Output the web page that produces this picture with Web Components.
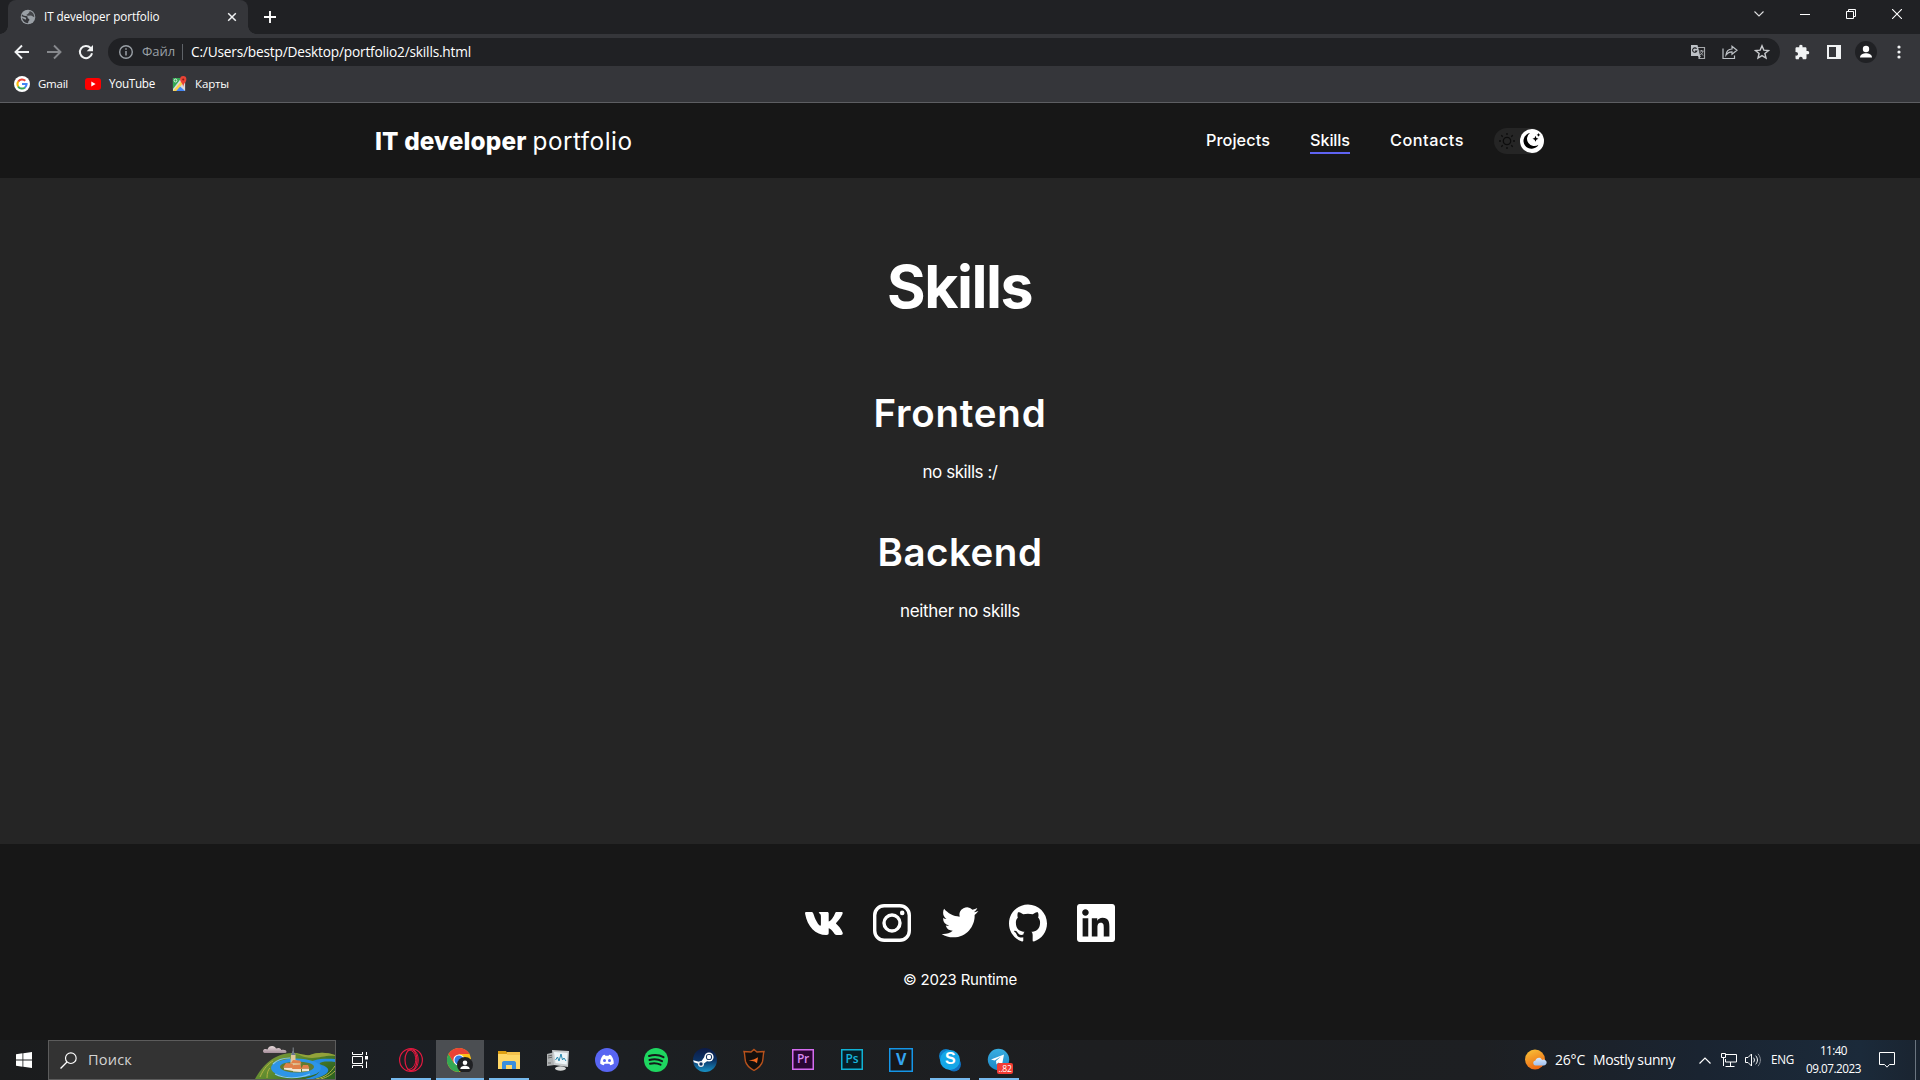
<!DOCTYPE html>
<html lang="ru">
<head>
<meta charset="utf-8">
<title>IT developer portfolio</title>
<style>
html,body{margin:0;height:100%;background:#252525;overflow:hidden}
body{font-family:"Open Sans","Noto Sans",sans-serif;color:#fff}
</style>
</head>
<body>
<app-desktop></app-desktop>
<script>
const ICONS = {
globe:['0 0 16 16','<circle cx="8" cy="8" r="7.3" fill="#9aa0a6"/><path d="M2 5.2C3 7 5 7 7.3 7.2c.6 1.3-.2 2 1.400 2.500 1 .5 1 1.800-.2 2.200L8 14.300C5 14 2.700 12 2 9l3.200 1.600c1.300 0 1.200-1.700.2-2.200L1.700 7.200z" fill="#35363a"/><path d="M8.300 2l1.500.2c0 1.300-1.700 1.600-1.700 2.600L6.200 6l1.500.8 3.400-.3 3.200 1.700c0-3.800-2.600-6.300-6-6.200z" fill="#35363a" opacity=".85"/>'],
close:['0 0 10 10','<path d="M1.200 1.200l7.600 7.600M8.800 1.200L1.200 8.800" stroke="#f1f3f4" stroke-width="1.500"/>'],
plus:['0 0 14 14','<path d="M7 1v12M1 7h12" stroke="#fff" stroke-width="1.900"/>'],
back:['0 0 16 16','<path d="M15 8H2.500M8 1.500L1.500 8 8 14.500" fill="none" stroke="#f1f3f4" stroke-width="1.900"/>'],
fwd:['0 0 16 16','<path d="M1 8h12.500M8 1.500L14.500 8 8 14.500" fill="none" stroke="#87898d" stroke-width="1.900"/>'],
reload:['0 0 16 16','<path d="M14 9.200A6.100 6.100 0 1 1 12.600 4L14 5.500" fill="none" stroke="#f1f3f4" stroke-width="2"/><path d="M15 1v6.300H8.700z" fill="#f1f3f4"/>'],
info:['0 0 16 16','<circle cx="8" cy="8" r="6.300" fill="none" stroke="#9aa0a6" stroke-width="1.400"/><path d="M8 7v4.500M8 4.300v1.500" stroke="#9aa0a6" stroke-width="1.500"/>'],
google:['0 0 16 16','<circle cx="8" cy="8" r="8" fill="#fff"/><g fill="none" stroke-width="2"><path d="M4.200 5.600A4.600 4.600 0 0 1 11.300 4.800" stroke="#ea4335"/><path d="M4.200 10.500a4.700 4.700 0 0 1 0-5" stroke="#fbbc05"/><path d="M11 11.500a4.600 4.600 0 0 1-6.900-1.100" stroke="#34a853"/><path d="M8 8.100h4.600a4.600 4.600 0 0 1-1.700 3.500" stroke="#4285f4"/></g>'],
youtube:['0 0 16 12','<rect width="16" height="12" rx="3" fill="#f00"/><path d="M6.300 3.500v5L10.600 6z" fill="#fff"/>'],
maps:['0 0 16 16','<path d="M1 2h13v13H1z" fill="#dadce0"/><path d="M1 2h9L1 13z" fill="#34a853"/><path d="M3 15l5-5 6 5z" fill="#4285f4"/><path d="M1 15L11 4l2 2-8.500 9z" fill="#fbd24b"/><circle cx="3.700" cy="4.500" r="1.500" fill="none" stroke="#fff" stroke-width=".8"/><path d="M12 0a3.300 3.300 0 0 1 3.300 3.500C15.300 6 12.500 7 12 11c-.5-4-3.300-5-3.300-7.500A3.300 3.300 0 0 1 12 0z" fill="#ea4335"/><circle cx="12" cy="3.500" r="1.100" fill="#8c1d13"/>'],
translate:['0 0 16 16','<path d="M7 3.500h7.500v11H8.500" fill="none" stroke="#a4a6a9" stroke-width="1.200"/><path d="M1 1h6.500l2.700 11H1z" fill="#bdc1c6"/><path d="M8 12h3l-2 3z" fill="#bdc1c6"/><path d="M6.600 4.800a2.200 2.200 0 1 0 .2 2.200H4.900" fill="none" stroke="#202124" stroke-width="1.100"/><path d="M9.500 7h4M11.500 6v1.300M13 7c-.5 2-1.500 3.200-3 4M10.500 8.500l2.500 3" stroke="#a4a6a9" fill="none"/>'],
share:['0 0 16 16','<path d="M1 4.500v10h11.500v-3" fill="none" stroke="#bdc1c6" stroke-width="1.200"/><path d="M4 11c.3-3.800 2.300-5.800 6-6V2.200L15 6.300l-5 4V7.800c-3-.1-4.500 1-6 3.200z" fill="none" stroke="#bdc1c6" stroke-width="1.200"/>'],
star:['0 0 16 16','<path d="M8 1.800l1.800 4.300 4.700.4-3.600 3 1.100 4.600L8 11.600l-4 2.500 1.100-4.600-3.600-3 4.700-.4z" fill="none" stroke="#c8cacd" stroke-width="1.400"/>'],
puzzle:['0 0 16 16','<path d="M1.500 4.500c0-.8.5-1.300 1.300-1.300h2.500C5 1.400 5.700.7 6.900.7s1.900.7 1.600 2.500h2.700c.8 0 1.300.5 1.300 1.300v2.600c1.800-.3 2.700.4 2.700 1.600s-.9 1.900-2.700 1.600V14c0 .8-.5 1.300-1.300 1.300H8.700c.2-1.600-.5-2.600-1.900-2.600s-2.100 1-1.900 2.600H2.800c-.8 0-1.300-.5-1.300-1.300v-2.400c1.600.2 2.500-.4 2.500-1.600S3.100 7.900 1.500 8.100z" fill="#f1f3f4"/>'],
panel:['0 0 14 14','<path fill-rule="evenodd" d="M0 0h14v14H0zM2 2v10h7V2z" fill="#f1f3f4"/>'],
person:['0 0 22 22','<circle cx="11" cy="11" r="11" fill="#202124"/><circle cx="11" cy="8" r="3.200" fill="#fff"/><path d="M5 16.500c0-3 3.500-4.200 6-4.200s6 1.200 6 4.200z" fill="#fff"/>'],
dots:['0 0 4 14','<circle cx="2" cy="2" r="1.600" fill="#f1f3f4"/><circle cx="2" cy="7" r="1.600" fill="#f1f3f4"/><circle cx="2" cy="12" r="1.600" fill="#f1f3f4"/>'],
chevd:['0 0 10 6','<path d="M.5.500L5 5 9.500.5" fill="none" stroke="#dedfe0" stroke-width="1.100"/>'],
min:['0 0 10 10','<path d="M0 5.500h10" stroke="#fff"/>'],
restore:['0 0 10 10','<path d="M.5 2.500h7v7h-7zM2.500 2.500v-2h7v7h-2" fill="none" stroke="#fff"/>'],
wclose:['0 0 10 10','<path d="M0 0l10 10M10 0L0 10" stroke="#fff" stroke-width="1.100"/>'],
sun:['0 0 16 16','<circle cx="8" cy="8" r="3.700" fill="none" stroke="#0c0c0c" stroke-width="1.300"/><path d="M8 0v2M8 14v2M0 8h2M14 8h2M2.300 2.300l1.400 1.400M12.300 12.300l1.400 1.400M13.700 2.300l-1.400 1.400M3.700 12.300l-1.400 1.400" stroke="#0c0c0c" stroke-width="1.300"/>'],
moon:['0 0 24 24','<circle cx="12" cy="12" r="12" fill="#fff"/><path d="M10 4a7 7 0 0 0 8.500 11.700A8 8 0 1 1 10 4z" fill="#000"/><path d="M15.500 6.800l.9 2.100 2.100.9-2.100.9-.9 2.100-.9-2.100-2.100-.9 2.100-.9zM18.500 4l.6 1.300 1.300.6-1.300.6-.6 1.300-.6-1.300-1.300-.6 1.300-.6z" fill="#000"/>'],
vk:['0 0 38 38','<path d="M1.300 8h5c1.200 0 1.700.5 2.100 1.700C9.900 14.500 12.500 19.800 14.700 21.500c.8.500 1.200.2 1.200-1.200v-8.200c-.1-1.700-.6-2.200-1.700-2.800-.8-.5-.5-1.300.7-1.300h7.300c1 0 1.500.5 1.500 1.600v7.800c1.800-.3 4.700-4 6.300-8 .4-.9.900-1.400 2-1.400h4.400c1.200 0 1.500.7 1.200 1.600-.9 3.300-4.500 7.400-6.700 9.800 2.200 1.900 5.200 5 6.700 9 .5 1.500-.1 2.600-1.600 2.600h-4.400c-1.500 0-2-.9-3.200-2.700-1.200-1.700-3-3.500-4.700-4v4.200c0 1.800-.5 2.500-2.400 2.500C10.500 31 2.300 22.500.1 9.700 0 8.700.3 8 1.300 8z" fill="#fff"/>'],
instagram:['0 0 38 38','<rect x="1.700" y="1.700" width="34.600" height="34.600" rx="9.500" fill="none" stroke="#fff" stroke-width="3.400"/><circle cx="19" cy="19" r="8" fill="none" stroke="#fff" stroke-width="3.400"/><circle cx="29.200" cy="8.900" r="2.300" fill="#fff"/>'],
twitter:['-.4 0 24.800 24.800','<path d="M23.953 4.570a10 10 0 01-2.825.775 4.958 4.958 0 002.163-2.723c-.951.555-2.005.959-3.127 1.184a4.920 4.920 0 00-8.384 4.482C7.690 8.095 4.067 6.130 1.640 3.162a4.822 4.822 0 00-.666 2.475c0 1.710.870 3.213 2.188 4.096a4.904 4.904 0 01-2.228-.616v.060a4.923 4.923 0 003.946 4.827 4.996 4.996 0 01-2.212.085 4.936 4.936 0 004.604 3.417 9.867 9.867 0 01-6.102 2.105c-.390 0-.779-.023-1.170-.067a13.995 13.995 0 007.557 2.209c9.053 0 13.998-7.496 13.998-13.985 0-.210 0-.420-.015-.630A9.935 9.935 0 0024 4.590z" fill="#fff"/>'],
github:['0 0 24 24','<path d="M12 .297c-6.630 0-12 5.373-12 12 0 5.303 3.438 9.800 8.205 11.385.600.113.820-.258.820-.577 0-.285-.010-1.040-.015-2.040-3.338.724-4.042-1.610-4.042-1.610C4.422 18.070 3.633 17.700 3.633 17.700c-1.087-.744.084-.729.084-.729 1.205.084 1.838 1.236 1.838 1.236 1.070 1.835 2.809 1.305 3.495.998.108-.776.417-1.305.760-1.605-2.665-.300-5.466-1.332-5.466-5.930 0-1.310.465-2.380 1.235-3.220-.135-.303-.540-1.523.105-3.176 0 0 1.005-.322 3.300 1.230.960-.267 1.980-.399 3-.405 1.020.006 2.040.138 3 .405 2.280-1.552 3.285-1.230 3.285-1.230.645 1.653.240 2.873.120 3.176.765.840 1.230 1.910 1.230 3.220 0 4.610-2.805 5.625-5.475 5.920.420.360.810 1.096.810 2.220 0 1.606-.015 2.896-.015 3.286 0 .315.210.690.825.570C20.565 22.092 24 17.592 24 12.297c0-6.627-5.373-12-12-12" fill="#fff"/>'],
linkedin:['0 0 24 24','<path d="M20.447 20.452h-3.554v-5.569c0-1.328-.027-3.037-1.852-3.037-1.853 0-2.136 1.445-2.136 2.939v5.667H9.351V9h3.414v1.561h.046c.477-.9 1.637-1.850 3.370-1.850 3.601 0 4.267 2.370 4.267 5.455v6.286zM5.337 7.433c-1.144 0-2.063-.926-2.063-2.065 0-1.138.920-2.063 2.063-2.063 1.140 0 2.064.925 2.064 2.063 0 1.139-.925 2.065-2.064 2.065zm1.782 13.019H3.555V9h3.564v11.452zM22.225 0H1.771C.792 0 0 .774 0 1.729v20.542C0 23.227.792 24 1.771 24h20.451C23.200 24 24 23.227 24 22.271V1.729C24 .774 23.200 0 22.222 0h.003z" fill="#fff"/>'],
windows:['0 0 16 16','<path d="M0 2.200L6.500 1.300V7.600H0zM7.300 1.200L16 0v7.600H7.300zM0 8.400h6.500v6.300L0 13.800zM7.300 8.400H16V16l-8.700-1.200z" fill="#fff"/>'],
search:['0 0 16 16','<circle cx="10.200" cy="5.800" r="5" fill="none" stroke="#fff" stroke-width="1.100"/><path d="M6.600 9.400L.5 15.500" stroke="#fff" stroke-width="1.200"/>'],
taskview:['0 0 16 16','<path d="M.5 0v2.500h10V0M.5 16v-2.500h10V16M.500 4.500h10v7H.5zM14.500 0v3M14.500 9.500V16" fill="none" stroke="#fff"/><path d="M13 4h3v3.500h-3z" fill="#fff"/>'],
village:['0 0 80 38','<defs><linearGradient id="h" x2="1" y2=".6"><stop stop-color="#8fa23e"/><stop offset=".5" stop-color="#5d8a2e"/><stop offset="1" stop-color="#2f6420"/></linearGradient><linearGradient id="c" y2="1" x2="0"><stop stop-color="#e9dcdc"/><stop offset="1" stop-color="#a58d9a"/></linearGradient></defs><path d="M0 38C8 24 18 13 37 12c8 0 12 3 18 2 8-3 16-3 25 0v24z" fill="url(#h)"/><path d="M37 12c9 1 10 5 20 5 9 0 14-3 23-2v-1c-9-3-17-3-25 0-6 1-10-2-18-2z" fill="#94a23a"/><path d="M80 18c-14-1-26 1-25 5 1 3 11 4 9 8s-8 5-14 7h8c9-2 17-6 15-10-2-4-10-4-8-6 1-1 6-2 15-1z" fill="#278be0"/><ellipse cx="41" cy="27" rx="25" ry="9.500" fill="#2d95e8"/><path d="M18 23c4-4 10-6 17-6M20 33c9 5 24 5 35 0" stroke="#80c5f7" stroke-width="1.200" fill="none"/><ellipse cx="42" cy="26" rx="17" ry="5.500" fill="#617b30"/><path d="M36 14l2-4 2.500 4v5l5 2v6H35z" fill="#dfc79b"/><path d="M36 14l2-4.500 2.500 4.500z" fill="#69758d"/><path d="M38.200 6.500v4" stroke="#9aa3ad" stroke-width=".8"/><path d="M29 26.500h9V30l-9-1.500zM38 27.500h8V31l-8-.5zM47 27.500h7V30l-7 .5z" fill="#f4e4cf"/><path d="M28 26.500l3-4.500 6.500.5 1.500 4.500zM37 28l1.500-4 6.500-.5 2 4.500zM36 22l2-3 7 .5 1.500 3zM46.500 27.500l1.500-3.500h5l1.500 3.500z" fill="#e0804a"/><path d="M61 38c10-2 14-6 19-13M66 38c7-2 11-5 14-8M5 36c4-9 8-13 13-16M12 37c0-5 1-8 3-10" stroke="#b4b244" stroke-width="1" fill="none"/><path d="M8 10c0-2.500 3.500-2.500 4.500-1.500 1-4.500 7.500-4.500 8.500-1 3-1.500 5.500 0 5 1.500 3-.8 5.500 0 5.500 1.700 0 1-1 1.300-2 1.300H10C9 12 8 11.500 8 10z" fill="url(#c)"/>'],
opera:['0 0 24 24','<g fill="none" stroke="#e3193f"><circle cx="12" cy="12" r="11.400" stroke-width="1.200"/><ellipse cx="12" cy="12" rx="6" ry="10.500" stroke-width="1.200"/><path d="M8.500 2.500c10-3 12 19 0 19M14 1.500c7 3 7 18 0 21" stroke-width="1"/></g>'],
chrome:['0 0 26 24','<circle cx="12" cy="12" r="12" fill="#fbc116"/><path d="M1.600 6A12 12 0 0 0 12 24l5-9-10 0z" fill="#34a853"/><path d="M1.600 6A12 12 0 0 1 22.400 6H12L7 15z" fill="#ea4335"/><circle cx="12" cy="12" r="5.600" fill="#fff"/><circle cx="12" cy="12" r="4.500" fill="#347de0"/><circle cx="18" cy="17" r="8" fill="#202124"/><circle cx="18" cy="14.800" r="2.300" fill="#fff"/><path d="M13.300 21c0-2.500 2.700-3.300 4.700-3.300s4.700.8 4.700 3.300z" fill="#fff"/>'],
explorer:['0 0 24 24','<path d="M1 3h8l2 3h12v4H1z" fill="#dfa012"/><path d="M1 6h22v15H1z" fill="#ffd766"/><path d="M10 4h13v3H10z" fill="#f5c24c"/><path d="M5 21v-6c0-1 .5-2 2-2h10c1.500 0 2 1 2 2v6h-4v-4H9v4z" fill="#3a8edc"/>'],
monitor:['0 0 24 24','<path d="M1 6l8-2v13l-8 1z" fill="#aeb1b2"/><path d="M6 2l17 1-1 16-14-2z" fill="#c7cbcc"/><path d="M8 4l13.500 1-.8 11.500L9.500 15z" fill="#edf5f8"/><path d="M9.500 12l2-3 1.500 4 2-7 1.500 6 1.500-2 2 3" stroke="#2788ae" fill="none"/><ellipse cx="14.500" cy="20.500" rx="5.500" ry="2.200" fill="#d8dad9"/><path d="M2 8l4-.800M2 10l4-.800M2 15h3" stroke="#666"/>'],
discord:['0 0 24 24','<circle cx="12" cy="12" r="12" fill="#5865f2"/><path d="M8 7.300l1.800-.5.600 1h3.200l.6-1 1.800.5c2 2.500 3 5.500 2.700 8.400-1.300.9-2.400 1.300-3.500 1.500l-.8-1.400H9.600l-.8 1.400c-1.100-.2-2.200-.6-3.500-1.500C5 12.800 6 9.800 8 7.300z" fill="#fff"/><circle cx="9.500" cy="12.500" r="1.500" fill="#5865f2"/><circle cx="14.500" cy="12.500" r="1.500" fill="#5865f2"/>'],
spotify:['0 0 24 24','<circle cx="12" cy="12" r="12" fill="#1ed760"/><path d="M5 8c5-1.500 10.500-1 14.500 1.200M5.500 12c4.500-1.300 9-.8 12.500 1.200M6 15.700c4-1 7.500-.6 10.500 1" stroke="#14191a" stroke-width="2" stroke-linecap="round" fill="none"/>'],
steam:['0 0 24 24','<defs><linearGradient id="s" x2="0" y2="1"><stop stop-color="#0c1a45"/><stop offset=".5" stop-color="#0b3265"/><stop offset="1" stop-color="#1893c7"/></linearGradient></defs><circle cx="12" cy="12" r="12" fill="url(#s)"/><path d="M.2 12.300l7.500 2 4-5.800 4 3.500-6.800 5-8-2.800z" fill="#fff"/><circle cx="8" cy="16" r="3" fill="#eee"/><circle cx="8" cy="16" r="1.700" fill="#0b3265"/><circle cx="16" cy="9" r="4.600" fill="#fff"/><circle cx="16" cy="9" r="3.100" fill="#0b2b5b"/><circle cx="16" cy="9" r="2.200" fill="#fff"/>'],
shield:['0 0 24 24','<path d="M12 1.500l3 2.500 7-.5c-1 3-.500 5-1.500 10-1 4-5 7-8.500 9-3.500-2-7.500-5-8.500-9C2.500 8.500 3 6.500 2 3.500L9 4z" fill="#130f0d" stroke="#b8521c" stroke-width="1.400"/><path d="M6.500 12.200c4 0 6.500-1 9.500-3l-1 6-2.500-1.700z" fill="#f36a21"/>'],
pr:['0 0 22 21','<rect x=".75" y=".75" width="20.500" height="19.500" fill="#2a0634" stroke="#d56cf0" stroke-width="1.500"/>'],
ps:['0 0 22 21','<rect x=".75" y=".75" width="20.500" height="19.500" fill="#061e26" stroke="#10b2d5" stroke-width="1.500"/>'],
vegas:['0 0 24 24','<rect x=".75" y=".75" width="22.500" height="22.500" fill="#161719" stroke="#1596e8" stroke-width="1.500"/>'],
skype:['0 0 24 24','<circle cx="8" cy="8" r="7" fill="#0f7fc9"/><circle cx="16" cy="16.500" r="7" fill="#0f6fc0"/><circle cx="12" cy="12" r="10" fill="#14a7e8"/>'],
telegram:['0 0 24 24','<defs><linearGradient id="t" x2="0" y2="1"><stop stop-color="#37aee2"/><stop offset="1" stop-color="#1e88c7"/></linearGradient></defs><circle cx="11.500" cy="11.500" r="10.700" fill="url(#t)"/><path d="M4 11.500L17 6.500l-2 10.500-3.500-2.500-2 2-.5-3.500 5-4.500-6.500 4z" fill="#fff"/>'],
weather:['0 0 22 22','<defs><linearGradient id="w" x2=".4" y2="1"><stop stop-color="#f8c63a"/><stop offset="1" stop-color="#ee6a14"/></linearGradient><linearGradient id="wc" x2="0" y2="1"><stop stop-color="#dce9fc"/><stop offset="1" stop-color="#9fc0f0"/></linearGradient></defs><circle cx="10" cy="10.500" r="10" fill="url(#w)"/><path d="M11 16.500a2.500 2.500 0 0 1-.5-5c.5-2 2-3 4-2.800 1.500.3 2.300 1.300 2.500 2.300a3 3 0 1 1 2 5.500z" fill="url(#wc)"/>'],
chevu:['0 0 12 7','<path d="M.500 6.500L6 1l5.500 5.500" fill="none" stroke="#fff" stroke-width="1.200"/>'],
network:['0 0 16 14','<path d="M5 1.500h10.500v7.500H4.500V6M.500.500h4v4h-4zM2.500 4.500v8.500M4.500 13.500h9M9.500 9v4" fill="none" stroke="#fff"/>'],
volume:['0 0 16 14','<path d="M.5 4.500h2.500L6.500 1v12L3 9.500H.5z" fill="none" stroke="#fff"/><path d="M8.500 4.700c1.200 1.500 1.200 3.100 0 4.600M10.700 2.700c2.300 2.700 2.300 5.900 0 8.600" fill="none" stroke="#fff"/><path d="M13 .8c3.200 4 3.200 8.400 0 12.400" fill="none" stroke="#888e96"/>'],
notif:['0 0 16 16','<path d="M.500.500h15v12h-5L8 15.200 5.500 12.500h-5z" fill="none" stroke="#fff"/>']
};

class UiIcon extends HTMLElement{
  connectedCallback(){
    const [vb,body]=ICONS[this.getAttribute('name')];
    const w=this.getAttribute('w')||16,h=this.getAttribute('h')||w;
    this.attachShadow({mode:'open'}).innerHTML=`<style>:host{display:block;flex:none;width:${w}px;height:${h}px}svg{display:block}</style><svg width="${w}" height="${h}" viewBox="${vb}" preserveAspectRatio="none">${body}</svg>`;
  }
}
customElements.define('ui-icon',UiIcon);

/* One line of text whose tracking is tuned so that it fills the width in "w". */
class UiText extends HTMLElement{
  connectedCallback(){
    const w=+this.getAttribute('w'),s=this.getAttribute('s')||12;
    this.attachShadow({mode:'open'}).innerHTML=`<style>:host{display:block;flex:none;width:${w}px;font-size:${s}px;line-height:1.36;white-space:nowrap}span{display:inline-block}</style><span><slot></slot></span>`;
    const span=this.shadowRoot.querySelector('span');
    const n=this.textContent.length;
    span.style.letterSpacing=((w-span.getBoundingClientRect().width)/n).toFixed(3)+'px';
  }
}
customElements.define('ui-text',UiText);

function define(name,css,html){
  const t=document.createElement('template');
  t.innerHTML=`<style>*{box-sizing:border-box}${css}</style>${html}`;
  customElements.define(name,class extends HTMLElement{
    constructor(){super();this.attachShadow({mode:'open'}).append(t.content.cloneNode(true));}
  });
}

define('browser-tab',
 `:host{display:flex;align-items:center;position:relative;width:240px;height:34px;background:#35363a;border-radius:8px 8px 0 0;padding:0 11px 0 12px;box-sizing:border-box}
  :host::before,:host::after{content:"";position:absolute;bottom:0;width:8px;height:8px}
  :host::before{left:-8px;background:radial-gradient(circle at 0 0,#202124 7.500px,#35363a 8px)}
  :host::after{right:-8px;background:radial-gradient(circle at 100% 0,#202124 7.500px,#35363a 8px)}
  .t{flex:1;margin-left:8px}`,
 `<ui-icon name="globe" w="16"></ui-icon><div class="t"><slot></slot></div><ui-icon name="close" w="10"></ui-icon>`);
define('browser-tabs',
 `:host{display:flex;height:34px;background:#202124;padding:0 18px 0 8px}
  .plus{margin:10px 0 0 15px}.win{display:flex;align-items:flex-start;gap:36px;margin-left:auto;padding-top:9px}.c{margin-top:2px}`,
 `<browser-tab><ui-text w="115.500" s="11.700">IT developer portfolio</ui-text></browser-tab><ui-icon class="plus" name="plus" w="14"></ui-icon>
  <div class="win"><ui-icon class="c" name="chevd" w="10" h="6"></ui-icon><ui-icon name="min" w="10"></ui-icon><ui-icon name="restore" w="10"></ui-icon><ui-icon name="wclose" w="10"></ui-icon></div>`);
define('browser-toolbar',
 `:host{display:flex;align-items:center;height:36px;background:#35363a;padding:0 19px 0 14px}
  .box{display:flex;align-items:center;flex:1;height:28px;border-radius:14px;background:#202124;margin:0 14px 0 14px;padding:0 10px 0 10px}
  .nav,.right{display:flex;align-items:center;gap:16px}.grey{color:#9aa0a6;margin-left:8px}
  i{width:1px;height:16px;background:#5f6368;margin:0 8px 0 7px}.acts{display:flex;gap:16px;margin-left:auto}.right{gap:17px}.p{margin:0 3px 0 -3px}`,
 `<div class="nav"><ui-icon name="back" w="16"></ui-icon><ui-icon name="fwd" w="16"></ui-icon><ui-icon name="reload" w="16"></ui-icon></div>
  <div class="box"><ui-icon name="info" w="16"></ui-icon><ui-text class="grey" w="33" s="13">Файл</ui-text><i></i><ui-text w="280" s="13.700">C:/Users/bestp/Desktop/portfolio2/skills.html</ui-text>
  <div class="acts"><ui-icon name="translate" w="16"></ui-icon><ui-icon name="share" w="16"></ui-icon><ui-icon name="star" w="16"></ui-icon></div></div>
  <div class="right"><ui-icon name="puzzle" w="16"></ui-icon><ui-icon name="panel" w="14"></ui-icon><ui-icon class="p" name="person" w="22"></ui-icon><ui-icon name="dots" w="4" h="14"></ui-icon></div>`);
define('browser-bookmarks',
 `:host{display:flex;align-items:center;height:32px;background:#35363a;padding:0 0 4px 14px}
  ui-text{margin:0 17px 0 8px}`,
 `<ui-icon name="google" w="16"></ui-icon><ui-text w="30" s="11.500">Gmail</ui-text><ui-icon name="youtube" w="16" h="12"></ui-icon><ui-text w="46" s="11.700">YouTube</ui-text><ui-icon name="maps" w="15" h="16"></ui-icon><ui-text w="34" s="11.500">Карты</ui-text>`);

define('nav-link',
 `:host{display:block;font-weight:550;border-bottom:2px solid transparent;padding-top:2px}:host([active]){border-color:#5f63f2}`,`<slot></slot>`);
define('theme-switch',
 `:host{display:flex;align-items:center;width:50px;height:26px;border-radius:13px;background:#252525;padding:0 0 0 5px;box-sizing:border-box;justify-content:space-between}`,
 `<ui-icon name="sun" w="16"></ui-icon><ui-icon name="moon" w="24"></ui-icon>`);
define('site-header',
 `:host{display:flex;align-items:center;justify-content:space-between;height:75px;background:#171717;padding:0 376px 0 375px;font-family:Inter,sans-serif}
  .logo{display:flex;gap:6px;padding-top:2px}.b{font-weight:800}nav{display:flex;align-items:center;gap:40px}theme-switch{margin-left:-10px}`,
 `<div class="logo"><ui-text class="b" w="151.500" s="24.300">IT developer</ui-text><ui-text w="100" s="24.300">portfolio</ui-text></div>
  <nav><nav-link><ui-text w="64" s="16.300">Projects</ui-text></nav-link><nav-link active><ui-text w="40" s="16.300">Skills</ui-text></nav-link><nav-link><ui-text w="74" s="16.300">Contacts</ui-text></nav-link><theme-switch></theme-switch></nav>`);
define('skill-block',
 `:host{display:flex;flex-direction:column;align-items:center;height:139px}.p{margin-top:21px}`,
 `<slot name="title"></slot><div class="p"><slot></slot></div>`);
define('site-main',
 `:host{display:flex;flex-direction:column;align-items:center;height:666px;background:#252525;padding-top:69px;font-family:Inter,sans-serif}
  .h1{font-weight:650;margin:0 1px 60px 0}.h{font-weight:620}`,
 `<ui-text class="h1" w="145" s="59">Skills</ui-text>
  <skill-block><ui-text slot="title" class="h" w="173" s="38.500">Frontend</ui-text><ui-text w="75" s="17">no skills :/</ui-text></skill-block>
  <skill-block><ui-text slot="title" class="h" w="165" s="38.500">Backend</ui-text><ui-text w="120" s="17">neither no skills</ui-text></skill-block>`);
define('site-footer',
 `:host{display:flex;flex-direction:column;align-items:center;height:196px;background:#171717;padding-top:60px;font-family:Inter,sans-serif}
  .s{display:flex;gap:30px;margin-bottom:28px}`,
 `<div class="s"><ui-icon name="vk" w="38"></ui-icon><ui-icon name="instagram" w="38"></ui-icon><ui-icon name="twitter" w="38"></ui-icon><ui-icon name="github" w="38"></ui-icon><ui-icon name="linkedin" w="38"></ui-icon></div><ui-text w="114" s="15">© 2023 Runtime</ui-text>`);

define('task-item',
 `:host{display:flex;position:relative;align-items:center;justify-content:center;width:40px;height:40px;margin:0 4.500px;box-sizing:border-box}
  :host([open]){border-bottom:2px solid #76b9ed;padding-top:2px}:host([current]){width:48px;margin:0 .5px;background:#4b4e52}
  :host([raised]){padding-bottom:2px}
  .over{position:absolute;inset:0;display:flex;align-items:center;justify-content:center}:host([raised]) .over{bottom:2px}`,
 `<slot name="icon"></slot><div class="over"><slot></slot></div>`);
define('task-tray',
 `:host{display:flex;align-items:center;height:40px;margin-left:auto}
  .clock{display:flex;flex-direction:column;align-items:center;gap:2px;margin:0 18px 0 12px}
  hr{width:1px;height:40px;border:0;margin:0 4px 0 20px;background:#6b7580}`,
 `<ui-icon name="weather" w="22"></ui-icon><ui-text style="margin-left:8px" w="30" s="14">26°C</ui-text><ui-text style="margin-left:8px" w="82" s="14">Mostly sunny</ui-text>
  <ui-icon style="margin-left:24px" name="chevu" w="12" h="7"></ui-icon><ui-icon style="margin-left:10px" name="network" w="16" h="14"></ui-icon><ui-icon style="margin-left:8px" name="volume" w="16" h="14"></ui-icon>
  <ui-text style="margin-left:10px" w="23" s="11.700">ENG</ui-text>
  <div class="clock"><ui-text w="27" s="11.700">11:40</ui-text><ui-text w="55" s="11.700">09.07.2023</ui-text></div><ui-icon name="notif" w="16"></ui-icon><hr>`);
define('task-bar',
 `:host{display:flex;align-items:center;height:40px;background:linear-gradient(90deg,#1b1c1d 0,#1b1f24 400px,#1c1f22 600px,#1d1e20 1100px,#1d1f22 1480px,#1a2431 1700px,#1b2a3a 1860px,#1a2430)}
  .start{margin:0 16px}.search{display:flex;align-items:center;width:288px;height:40px;background:#333;border:1px solid #5c5c5c;padding-left:11px}
  .search ui-text{margin-left:11px;color:#d4d4d4}.v{margin-left:auto}.tv{margin:0 18.500px 0 16px}
  .badge{position:absolute;left:18px;top:23px;width:16px;height:11px;border-radius:2px;background:#f23c34;display:flex;align-items:center;justify-content:center}
  .g{font-family:"Liberation Sans",sans-serif;font-weight:700}`,
 `<ui-icon class="start" name="windows" w="16"></ui-icon>
  <div class="search"><ui-icon name="search" w="17"></ui-icon><ui-text w="44" s="14.500">Поиск</ui-text><ui-icon class="v" name="village" w="80" h="38"></ui-icon></div>
  <ui-icon class="tv" name="taskview" w="16"></ui-icon>
  <task-item open><ui-icon slot="icon" name="opera" w="24"></ui-icon></task-item>
  <task-item open current><ui-icon slot="icon" name="chrome" w="26" h="24"></ui-icon></task-item>
  <task-item open><ui-icon slot="icon" name="explorer" w="24"></ui-icon></task-item>
  <task-item><ui-icon slot="icon" name="monitor" w="24"></ui-icon></task-item>
  <task-item><ui-icon slot="icon" name="discord" w="24"></ui-icon></task-item>
  <task-item><ui-icon slot="icon" name="spotify" w="24"></ui-icon></task-item>
  <task-item><ui-icon slot="icon" name="steam" w="24"></ui-icon></task-item>
  <task-item><ui-icon slot="icon" name="shield" w="24"></ui-icon></task-item>
  <task-item raised><ui-icon slot="icon" name="pr" w="22" h="21"></ui-icon><ui-text w="12" s="12" style="color:#d98af2;font-weight:600">Pr</ui-text></task-item>
  <task-item raised><ui-icon slot="icon" name="ps" w="22" h="21"></ui-icon><ui-text w="13" s="12" style="color:#17b5dc;font-weight:600">Ps</ui-text></task-item>
  <task-item><ui-icon slot="icon" name="vegas" w="24"></ui-icon><ui-text w="10" s="16" style="color:#35a5ee;font-weight:700">V</ui-text></task-item>
  <task-item open><ui-icon slot="icon" name="skype" w="24"></ui-icon><ui-text class="g" w="10" s="16">S</ui-text></task-item>
  <task-item open><ui-icon slot="icon" name="telegram" w="24"></ui-icon><div class="badge"><ui-text w="13" s="8.500">..82</ui-text></div></task-item>
  <task-tray></task-tray>`);
define('app-desktop',
 `:host{display:flex;flex-direction:column;width:1920px;height:1080px;overflow:hidden}browser-bookmarks{border-bottom:1px solid #5d5e62;height:33px}`,
 `<browser-tabs></browser-tabs><browser-toolbar></browser-toolbar><browser-bookmarks></browser-bookmarks><site-header></site-header><site-main></site-main><site-footer></site-footer><task-bar></task-bar>`);
</script>
</body>
</html>
